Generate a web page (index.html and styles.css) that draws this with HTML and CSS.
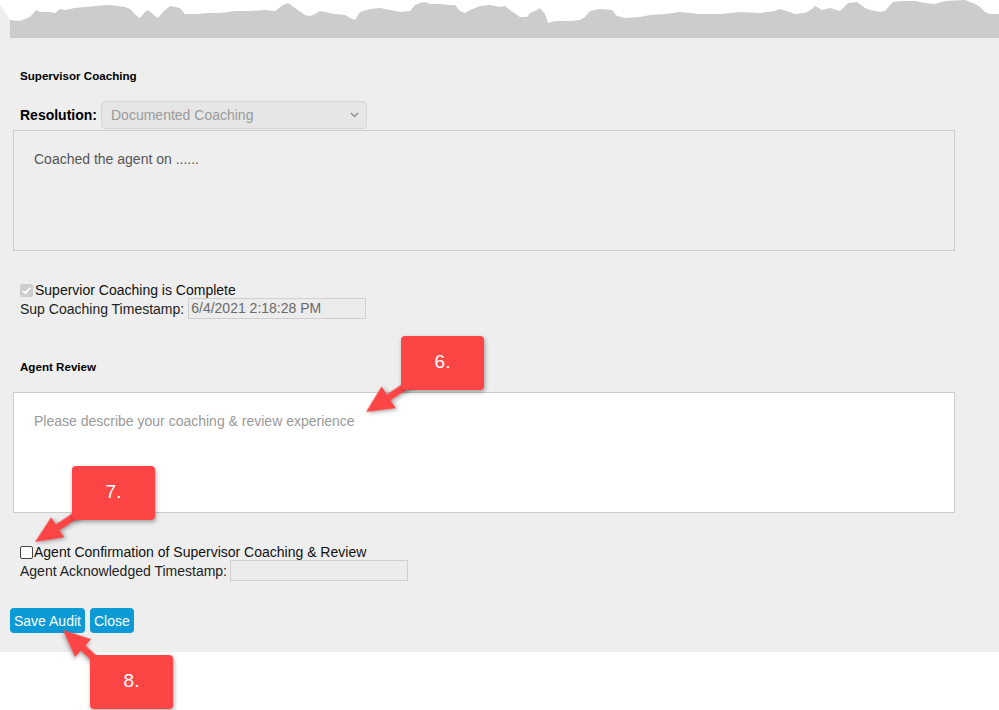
FILE: index.html
```html
<!DOCTYPE html>
<html>
<head>
<meta charset="utf-8">
<title>Supervisor Coaching</title>
<link rel="stylesheet" href="styles.css">
</head>
<body>
<div class="page">
  <svg class="torn" width="999" height="38" viewBox="0 0 999 38">
    <polygon fill="#eeeeee" points="0,5 10,20 10,38 0,38"/>
    <polygon fill="#cccccc" points="10,20 20,21 30,17 36,10 40,12 50,12 55,13 60,9 65,10 75,8 85,7 95,6 110,5 125,7 130,9 137,16 140,18 145,12 148,10 155,16 158,18 163,12 170,6 180,8 185,14 195,14 210,13 220,13 235,11 250,11 265,10 275,11 283,5 288,3 295,8 305,15 310,16 315,14 320,11 335,14 345,15 350,18 355,20 360,12 370,9 380,8 390,10 400,12 410,11 415,5 420,3 425,2 430,4 440,4 450,5 455,5 460,11 465,13 470,10 480,6 490,5 500,7 505,6 510,10 520,17 527,17 530,13 537,10 540,8 545,14 548,23 555,21 570,21 580,20 585,17 590,11 600,9 612,10 617,16 625,18 640,17 650,15 665,14 680,12 700,14 720,14 740,12 760,13 775,11 780,9 790,12 795,14 805,13 812,9 815,6 822,10 830,8 840,11 843,8 848,3 857,2 865,8 870,10 880,12 885,11 893,2 900,1 915,1 925,3 935,4 945,1 965,0 975,4 980,7 985,12 990,14 999,14 999,38 10,38"/>
  </svg>
  <div class="panel">
    <h3 class="section-title">Supervisor Coaching</h3>
    <div class="res-row">
      <span class="res-label">Resolution:</span>
      <div class="select">
        <span>Documented Coaching</span>
        <svg class="chev" width="9" height="6" viewBox="0 0 9 6"><path d="M1 1 L4.5 4.5 L8 1" fill="none" stroke="#8a8a8a" stroke-width="1.4"/></svg>
      </div>
    </div>
    <div class="textarea readonly">Coached the agent on ......</div>

    <div class="check-row first-check">
      <span class="cb cb-disabled"><svg width="13" height="13" viewBox="0 0 13 13"><path d="M2.8 6.8 L5.3 9.2 L10.3 3.6" fill="none" stroke="#ffffff" stroke-width="1.8"/></svg></span>
      <span>Supervior Coaching is Complete</span>
    </div>
    <div class="ts-row">
      <span>Sup Coaching Timestamp:</span>
      <span class="input">6/4/2021 2:18:28 PM</span>
    </div>

    <h3 class="section-title agent-title">Agent Review</h3>
    <div class="textarea editable">Please describe your coaching &amp; review experience</div>

    <div class="check-row first-check">
      <span class="cb cb-empty"></span>
      <span>Agent Confirmation of Supervisor Coaching &amp; Review</span>
    </div>
    <div class="ts-row">
      <span>Agent Acknowledged Timestamp:</span>
      <span class="input input-narrow"></span>
    </div>

    <div class="buttons">
      <button class="btn">Save Audit</button>
      <button class="btn">Close</button>
    </div>
  </div>

  <div class="annotations">
    <svg class="arrows" width="999" height="710" viewBox="0 0 999 710">
      <g class="arrow" transform="translate(366,412) rotate(-33)">
        <rect x="20" y="-3.5" width="40" height="7" />
        <polygon points="0,0 27,-13 27,13"/>
      </g>
      <g class="arrow" transform="translate(35,542) rotate(-33)">
        <rect x="20" y="-3.5" width="44" height="7" />
        <polygon points="0,0 27,-12 27,12"/>
      </g>
      <g class="arrow" transform="translate(63,630) rotate(42)">
        <rect x="20" y="-3.5" width="48" height="7" />
        <polygon points="0,0 27,-12 27,12"/>
      </g>
    </svg>
    <div class="callout c6">6.</div>
    <div class="callout c7">7.</div>
    <div class="callout c8">8.</div>
  </div>
</div>
</body>
</html>
```

FILE: styles.css
```css
html, body {
  margin: 0;
  padding: 0;
  background: #ffffff;
}
body {
  font-family: "Liberation Sans", Arial, sans-serif;
  font-size: 14px;
  color: #111;
}
.page {
  position: relative;
  width: 999px;
  height: 710px;
  overflow: hidden;
}
.torn {
  display: block;
}
.panel {
  background: #eeeeee;
  padding: 31px 0 19px 0;
}
.section-title {
  margin: 0 0 0 20px;
  font-size: 11.6px;
  line-height: 13px;
  font-weight: bold;
  color: #000;
}
.agent-title {
  margin-top: 41px;
}
.res-row {
  display: flex;
  align-items: center;
  margin-top: 19px;
  padding-left: 20px;
  height: 28px;
}
.res-label {
  font-weight: bold;
  font-size: 14px;
  color: #000;
}
.select {
  margin-left: 4px;
  box-sizing: border-box;
  width: 266px;
  height: 28px;
  border: 1px solid #d6d6d6;
  border-radius: 4px;
  background: #e6e6e6;
  color: #9a9a9a;
  display: flex;
  align-items: center;
  justify-content: space-between;
  padding: 0 7px 0 9px;
}
.chev {
  display: block;
}
.textarea {
  box-sizing: border-box;
  margin-left: 13px;
  width: 942px;
  height: 121px;
  border: 1px solid #cccccc;
  padding: 20px 20px;
  line-height: 16px;
}
.readonly {
  margin-top: 1px;
  background: #eeeeee;
  color: #555555;
}
.editable {
  margin-top: 19px;
  background: #ffffff;
  color: #999999;
}
.check-row {
  display: flex;
  align-items: center;
  margin-top: 31px;
  padding-left: 20px;
  height: 16px;
  line-height: 16px;
  color: #111;
}
.cb {
  box-sizing: border-box;
  width: 13px;
  height: 13px;
  border-radius: 2px;
  margin-right: 1px;
  display: flex;
}
.cb-disabled {
  background: #cdcdcd;
  margin-right: 2px;
}
.cb-empty {
  background: #ffffff;
  border: 1px solid #444;
}
.ts-row {
  display: flex;
  align-items: center;
  padding-left: 20px;
  height: 21px;
  color: #222;
}
.input {
  box-sizing: border-box;
  margin-left: 4px;
  width: 178px;
  height: 21px;
  border: 1px solid #cfcfcf;
  background: #ececec;
  color: #6a6a6a;
  line-height: 19px;
  padding-left: 2px;
}
.input-narrow {
  margin-left: 3px;
}
.buttons {
  display: flex;
  gap: 5px;
  margin-top: 27px;
  padding-left: 10px;
}
.btn {
  font-family: "Liberation Sans", Arial, sans-serif;
  font-size: 14px;
  height: 25px;
  line-height: 27px;
  padding: 0 4px;
  border: none;
  border-radius: 4px;
  background: #0b9ad6;
  color: #ffffff;
}
.annotations {
  position: absolute;
  left: 0;
  top: 0;
  width: 999px;
  height: 710px;
  pointer-events: none;
}
.arrows {
  position: absolute;
  left: 0;
  top: 0;
}
.arrow {
  fill: #fe4545;
  filter: drop-shadow(1px 2px 2px rgba(0,0,0,0.35));
}
.callout {
  position: absolute;
  width: 83px;
  height: 54px;
  background: #fe4545;
  border-radius: 4px;
  box-shadow: 1px 2px 4px rgba(0,0,0,0.35);
  color: #ffffff;
  font-size: 19px;
  text-align: center;
  box-sizing: border-box;
  padding-bottom: 2px;
  line-height: 52px;
}
.c6 { left: 401px; top: 336px; }
.c7 { left: 72px; top: 466px; }
.c8 { left: 90px; top: 655px; }
```
